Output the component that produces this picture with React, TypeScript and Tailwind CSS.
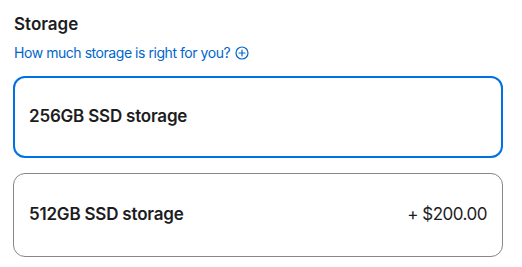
import React from 'react';

const options = [
  { label: '256GB SSD storage', price: '', selected: true },
  { label: '512GB SSD storage', price: '+ $200.00', selected: false },
];

const App = () => {
  return (
    <div className="min-h-screen bg-white px-[13px] pt-[14px] text-[#1d1d1f] font-['Inter',sans-serif]">
      <h2 className="text-[17px] font-semibold leading-[20px] ml-[1px]">Storage</h2>
      <a href="#" className="mt-[11px] ml-[1px] flex items-center gap-[5px] text-[14px] leading-[16px] tracking-[-0.45px] text-[#0066cc]">
        How much storage is right for you?
        <svg width="14" height="14" viewBox="0 0 14 14" fill="none" stroke="currentColor" strokeWidth="1.2">
          <circle cx="7" cy="7" r="6" />
          <path d="M7 4v6M4 7h6" strokeLinecap="round" />
        </svg>
      </a>

      <div className="mt-[15px] flex flex-col gap-[15px] w-[490px]">
        {options.map((opt) => (
          <div
            key={opt.label}
            className={
              opt.selected
                ? 'h-[82px] rounded-[12px] border-2 border-[#0071e3] px-[14px] flex items-center justify-between'
                : 'h-[84px] rounded-[12px] border border-[#86868b] px-[15px] flex items-center justify-between'
            }
          >
            <span className="text-[17px] font-semibold tracking-[-0.2px]">{opt.label}</span>
            {opt.price && <span className="text-[17px] tracking-[-0.5px]">{opt.price}</span>}
          </div>
        ))}
      </div>
    </div>
  );
};

export default App;
